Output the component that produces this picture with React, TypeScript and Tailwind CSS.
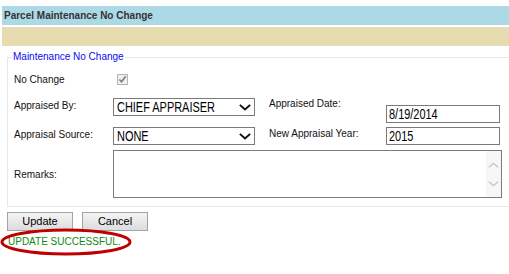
import React from "react";

function Chevron({ className, width = 1.6 }: { className?: string; width?: number }) {
  return (
    <svg viewBox="0 0 14 9" className={className} fill="none" stroke="currentColor" strokeWidth={width} preserveAspectRatio="none">
      <polyline points="1,1 7,7 13,1" />
    </svg>
  );
}

// the field text in the screenshot is tall but narrow, so squeeze it horizontally
function Narrow({ children }: { children: React.ReactNode }) {
  return <span className="inline-block origin-left scale-x-[0.73] whitespace-nowrap">{children}</span>;
}

function FakeSelect({ value }: { value: string }) {
  return (
    <div className="relative w-[142px] h-[18px] border border-[#7a7a7a] bg-white flex items-center pl-[3px] pb-[2px] text-[15px] leading-none text-black">
      <Narrow>{value}</Narrow>
      <Chevron className="absolute top-[5px] right-[3px] w-[12px] h-[7px] text-[#111]" width={2.2} />
    </div>
  );
}

function FakeInput({ value }: { value: string }) {
  return (
    <div className="w-[114px] h-[18px] border border-[#7a7a7a] bg-white flex items-center pl-[2px] pb-[2px] text-[15px] leading-none text-black">
      <Narrow>{value}</Narrow>
    </div>
  );
}

export default function App() {
  return (
    <div className="relative w-[509px] h-[274px] overflow-hidden bg-white text-[10px] text-[#111] font-['Liberation_Sans',Arial,sans-serif]">
      {/* Title bars */}
      <div className="pt-[6px] pl-[2px]">
        <div className="h-[19px] bg-[#add8e6] flex items-center pl-[2px] font-bold text-[#333]">
          Parcel Maintenance No Change
        </div>
        <div className="mt-[2px] h-[19px] bg-[#e6dcb0]" />
      </div>

      <fieldset className="ml-[7px] mt-[5px] w-[506px] border border-[#e6e6e6] pb-[8px]">
        <legend className="ml-[4px] px-[1px] text-[10px] leading-[12px] text-[#0b0bf0]">
          Maintenance No Change
        </legend>

        {/* No Change */}
        <div className="flex items-center h-[31px] pl-[6px] pt-[2px]">
          <span className="w-[99px]">No Change</span>
          <div className="ml-[4px] w-[11px] h-[11px] border border-[#b5b5b5] bg-[#efefef] flex items-center justify-center">
            <svg viewBox="0 0 10 10" className="w-[9px] h-[9px]" fill="none" stroke="#7c7c7c" strokeWidth="1.8">
              <polyline points="1.5,5 4,7.5 8.5,1.5" />
            </svg>
          </div>
        </div>

        {/* Appraised By / Date */}
        <div className="flex items-start h-[30px] pl-[6px]">
          <span className="w-[99px] mt-[6px] leading-[12px]">Appraised By:</span>
          <div className="mt-[4px]">
            <FakeSelect value="CHIEF APPRAISER" />
          </div>
          <span className="ml-[14px] w-[117px] mt-[4px] leading-[12px]">Appraised Date:</span>
          <div className="mt-[11px]">
            <FakeInput value="8/19/2014" />
          </div>
        </div>

        {/* Appraisal Source / Year */}
        <div className="flex items-start h-[26px] pl-[6px]">
          <span className="w-[99px] mt-[5px] leading-[12px]">Appraisal Source:</span>
          <div className="mt-[3px]">
            <FakeSelect value="NONE" />
          </div>
          <span className="ml-[14px] w-[117px] mt-[4px] leading-[12px]">New Appraisal Year:</span>
          <div className="mt-[3px]">
            <FakeInput value="2015" />
          </div>
        </div>

        {/* Remarks */}
        <div className="flex items-center pl-[6px]">
          <span className="w-[99px]">Remarks:</span>
          <div className="w-[389px] h-[48px] border border-[#7a7a7a] bg-white flex justify-end">
            <div className="w-[15px] h-full bg-[#f7f7f7] flex flex-col items-center justify-center gap-[13px]">
              <Chevron className="w-[11px] h-[6px] text-[#c4c4c4] rotate-180" />
              <Chevron className="w-[11px] h-[6px] text-[#c4c4c4]" />
            </div>
          </div>
        </div>
      </fieldset>

      {/* Buttons */}
      <div className="flex gap-[9px] ml-[7px] mt-[5px]">
        <button className="w-[66px] h-[19px] border border-[#a3a3a3] bg-gradient-to-b from-[#f4f4f4] to-[#dcdcdc] text-[11px] leading-none text-black">
          Update
        </button>
        <button className="w-[66px] h-[19px] border border-[#a3a3a3] bg-gradient-to-b from-[#f4f4f4] to-[#dcdcdc] text-[11px] leading-none text-black">
          Cancel
        </button>
      </div>

      <div className="ml-[8px] mt-[5px] leading-[12px] text-[#108a10]">UPDATE SUCCESSFUL.</div>

      {/* Red ellipse annotation */}
      <svg className="absolute left-0 top-[228px] w-[134px] h-[28px]" viewBox="0 0 134 28" fill="none">
        <ellipse cx="66" cy="14" rx="64" ry="12" stroke="#c00000" strokeWidth="3" />
      </svg>
    </div>
  );
}
